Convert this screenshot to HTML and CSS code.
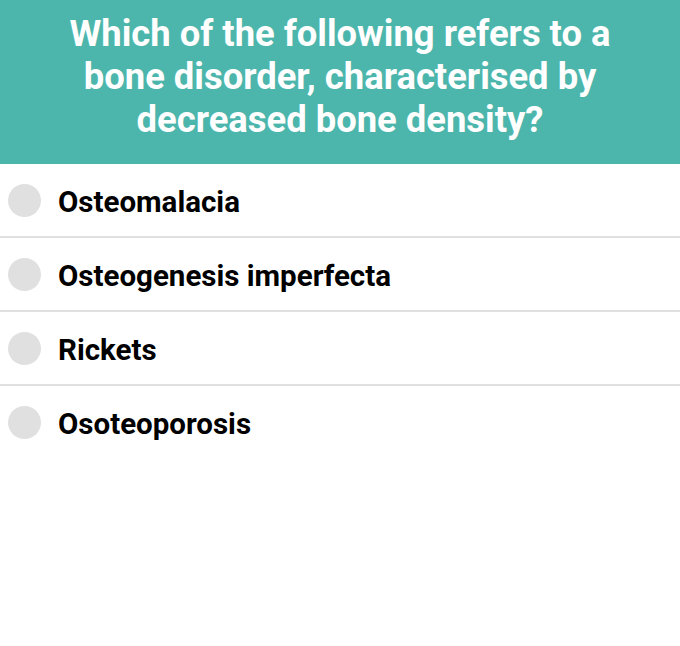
FILE: index.html
```html
<!DOCTYPE html>
<html>
<head>
<meta charset="utf-8">
<title>Quiz question</title>
<link rel="stylesheet" href="styles.css">
</head>
<body>
<section class="quiz">
  <h1 class="quiz-question">Which of the following refers to a bone disorder, characterised by decreased bone density?</h1>
  <ul class="quiz-options">
    <li class="quiz-option"><span class="quiz-radio"></span><span class="quiz-label">Osteomalacia</span></li>
    <li class="quiz-option"><span class="quiz-radio"></span><span class="quiz-label">Osteogenesis imperfecta</span></li>
    <li class="quiz-option"><span class="quiz-radio"></span><span class="quiz-label">Rickets</span></li>
    <li class="quiz-option"><span class="quiz-radio"></span><span class="quiz-label">Osoteoporosis</span></li>
  </ul>
</section>
</body>
</html>
```

FILE: styles.css
```css
body {
  margin: 0;
  font-family: Roboto, "Liberation Sans", sans-serif;
  background: #fff;
}

.quiz-question {
  margin: 0;
  background-color: #4db6ac;
  color: #fff;
  font-size: 36.4px;
  font-weight: 700;
  line-height: 43px;
  text-align: center;
  padding: 12px 50px 23px;
}

.quiz-options {
  list-style: none;
  margin: 0;
  padding: 0;
}

.quiz-option {
  display: flex;
  align-items: center;
  gap: 17px;
  padding: 20px 8px 19px;
  border-bottom: 2px solid #e0e0e0;
}

.quiz-option:last-child {
  border-bottom: none;
}

.quiz-radio {
  width: 33px;
  height: 33px;
  border-radius: 50%;
  background-color: #e0e0e0;
  flex-shrink: 0;
}

.quiz-label {
  font-size: 29.5px;
  font-weight: 700;
  line-height: 29px;
  padding-top: 4px;
  color: #000;
}
```
